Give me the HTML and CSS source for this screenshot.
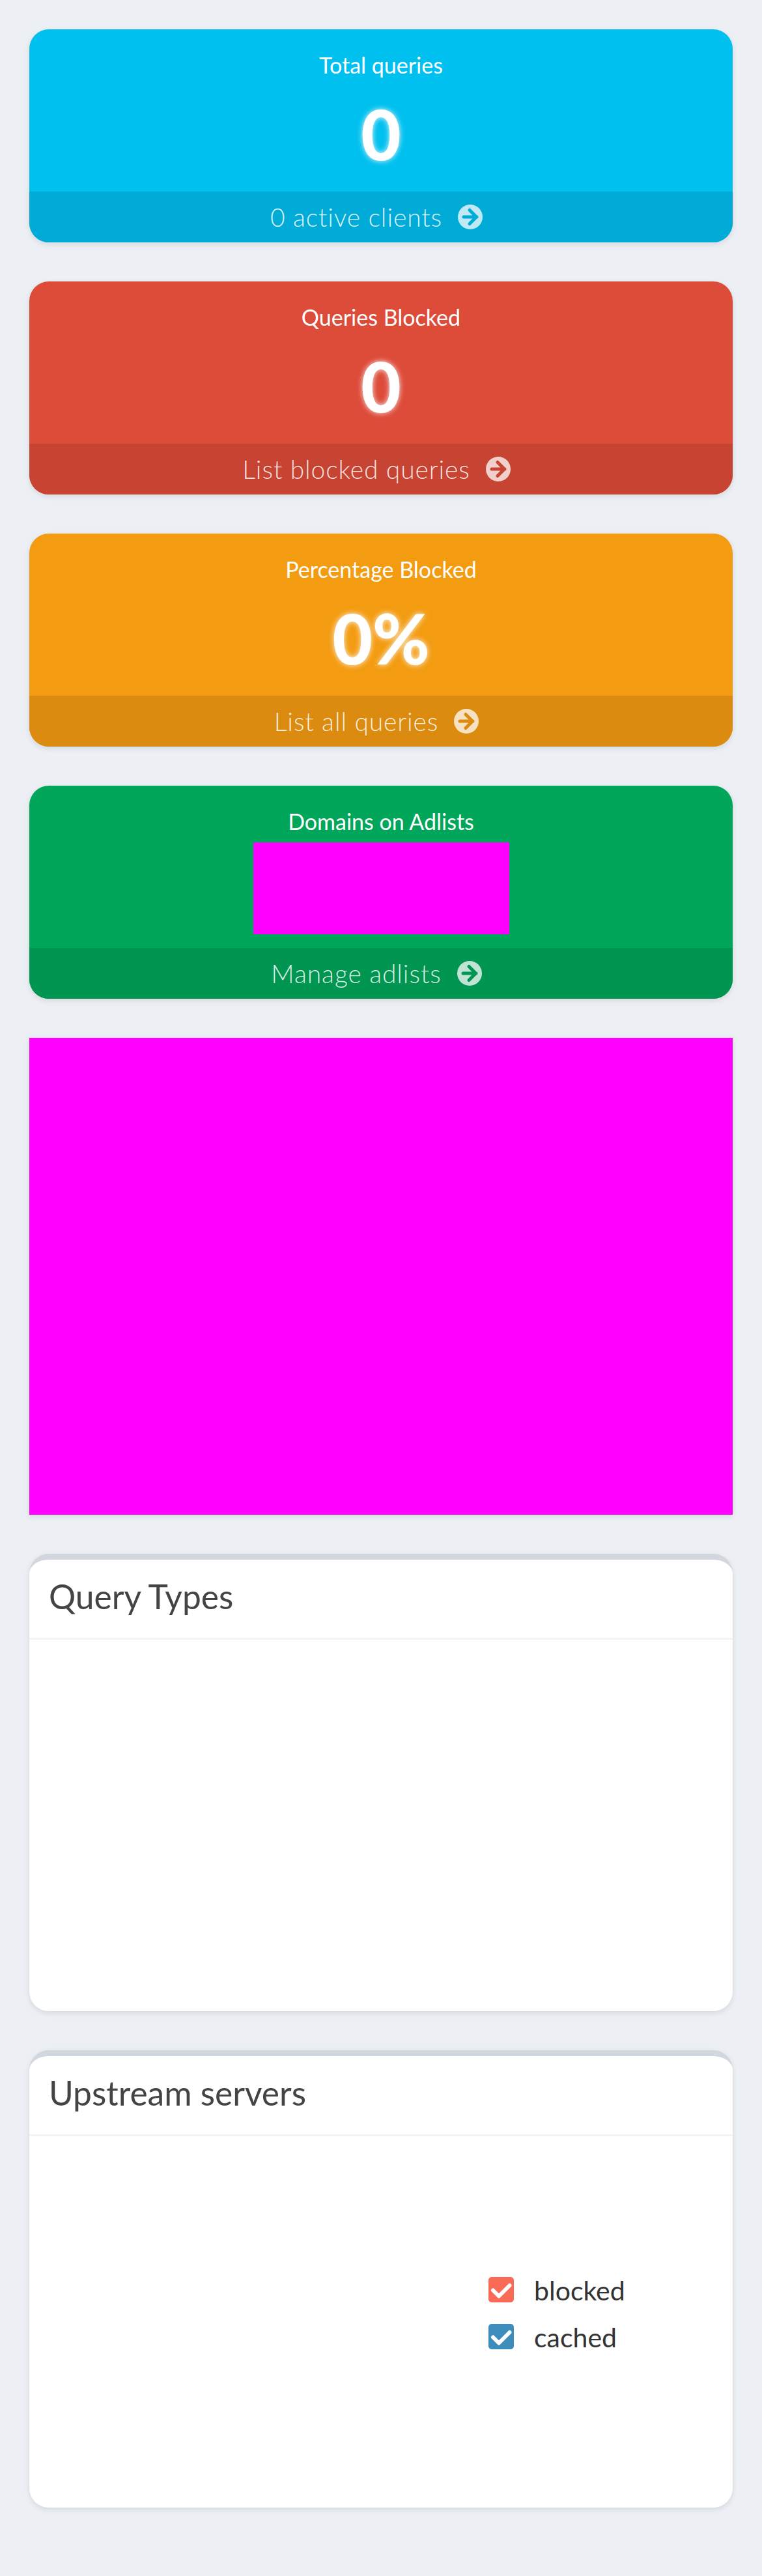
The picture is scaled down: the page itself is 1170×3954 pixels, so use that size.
FILE: index.html
```html
<!DOCTYPE html>
<html lang="en">
<head>
    <meta charset="UTF-8">
    <meta name="viewport" content="width=device-width, initial-scale=1.0">
    <title>Dashboard</title>
    <link rel="stylesheet" href="styles.css">
</head>
<body>

    <div class="page">
        <div class="stat-card stat-blue">
            <div class="stat-body">
                <p class="stat-label">Total queries</p>
                <div class="stat-number">0</div>
            </div>
            <a class="stat-footer" href="#">0 active clients
                <svg class="stat-arrow" viewBox="0 0 38 38"><circle cx="19" cy="19" r="19"/><path d="M9 19H29M18 8.500L28.500 19L18 29.500"/></svg>
            </a>
        </div>

        <div class="stat-card stat-red">
            <div class="stat-body">
                <p class="stat-label">Queries Blocked</p>
                <div class="stat-number">0</div>
            </div>
            <a class="stat-footer" href="#">List blocked queries
                <svg class="stat-arrow" viewBox="0 0 38 38"><circle cx="19" cy="19" r="19"/><path d="M9 19H29M18 8.500L28.500 19L18 29.500"/></svg>
            </a>
        </div>

        <div class="stat-card stat-orange">
            <div class="stat-body">
                <p class="stat-label">Percentage Blocked</p>
                <div class="stat-number">0%</div>
            </div>
            <a class="stat-footer" href="#">List all queries
                <svg class="stat-arrow" viewBox="0 0 38 38"><circle cx="19" cy="19" r="19"/><path d="M9 19H29M18 8.500L28.500 19L18 29.500"/></svg>
            </a>
        </div>

        <div class="stat-card stat-green">
            <div class="stat-body">
                <p class="stat-label">Domains on Adlists</p>
                <div class="stat-number"><div class="placeholder-small"></div></div>
            </div>
            <a class="stat-footer" href="#">Manage adlists
                <svg class="stat-arrow" viewBox="0 0 38 38"><circle cx="19" cy="19" r="19"/><path d="M9 19H29M18 8.500L28.500 19L18 29.500"/></svg>
            </a>
        </div>

        <div class="placeholder-large"></div>

        <div class="box">
            <h3 class="box-title">Query Types</h3>
            <div class="box-body"></div>
        </div>

        <div class="box">
            <h3 class="box-title">Upstream servers</h3>
            <div class="box-body">
                <ul class="legend">
                    <li class="legend-item">
                        <svg class="legend-check legend-blocked" viewBox="0 0 39 39"><path d="M7 20.500L16 29.500L32.500 13"/></svg>
                        <span class="legend-text">blocked</span>
                    </li>
                    <li class="legend-item">
                        <svg class="legend-check legend-cached" viewBox="0 0 39 39"><path d="M7 20.500L16 29.500L32.500 13"/></svg>
                        <span class="legend-text">cached</span>
                    </li>
                </ul>
            </div>
        </div>
    </div>

</body>
</html>
```

FILE: styles.css
```css
body {
    background: #ecf0f5;
    color: #333;
    font-family: Lato, 'Noto Sans', sans-serif;
    margin: 0;
}
.page {
    display: flex;
    flex-direction: column;
    gap: 60px;
    padding: 45px 45px 105px;
}
.stat-card {
    height: 327px;
    display: flex;
    flex-direction: column;
    background: var(--main);
    color: white;
    border-radius: 30px;
    overflow: hidden;
    box-shadow: 0px 3px 8px rgba(0, 0, 0, 0.1);
    text-align: center;
}
.stat-blue {
    --main: #00c0ef;
    --dark: #00acd7;
}
.stat-red {
    --main: #dd4b39;
    --dark: #c74433;
}
.stat-orange {
    --main: #f39c12;
    --dark: #db8c10;
}
.stat-green {
    --main: #00a65a;
    --dark: #009551;
}
.stat-body {
    height: 249px;
    padding-top: 23px;
    box-sizing: border-box;
}
.stat-label {
    margin: 0;
    font-size: 34px;
    line-height: 64px;
}
.stat-number {
    height: 141px;
    font-size: 106px;
    font-weight: 900;
    line-height: 147px;
    text-shadow: 0 0 8px rgba(255, 255, 255, 0.9);
}
.placeholder-small {
    width: 393px;
    height: 141px;
    margin: 0 auto;
    background: #f0f;
}
.stat-footer {
    height: 78px;
    padding-right: 14px;
    display: flex;
    justify-content: center;
    align-items: center;
    gap: 24px;
    background: var(--dark);
    color: rgba(255, 255, 255, 0.85);
    font-size: 39px;
    font-weight: 300;
    letter-spacing: 0.9px;
    text-decoration: none;
}
.stat-arrow {
    width: 38px;
    height: 38px;
}
.stat-arrow circle {
    fill: rgba(255, 255, 255, 0.75);
}
.stat-arrow path {
    fill: none;
    stroke: var(--dark);
    stroke-width: 5;
    stroke-linecap: round;
    stroke-linejoin: round;
}
.placeholder-large {
    height: 732px;
    background: #f0f;
    box-shadow: 0px 3px 8px rgba(0, 0, 0, 0.1);
}
.box {
    height: 702px;
    box-sizing: border-box;
    background: white;
    border-top: 9px solid #d2d6de;
    border-radius: 30px;
    box-shadow: 0px 3px 8px rgba(0, 0, 0, 0.1);
}
.box-title {
    height: 123px;
    box-sizing: border-box;
    margin: 0;
    padding-left: 30px;
    border-bottom: 3px solid #f4f4f4;
    color: #444;
    font-size: 51.500px;
    font-weight: 400;
    line-height: 112px;
}
.box-body {
    padding-top: 216px;
}
.legend {
    display: flex;
    flex-direction: column;
    gap: 33px;
    margin: 0 0 0 705px;
    padding: 0;
    list-style: none;
}
.legend-item {
    display: flex;
    align-items: center;
    gap: 31px;
    height: 39px;
    font-size: 41px;
}
.legend-text {
    line-height: 42px;
    padding-top: 3px;
}
.legend-check {
    width: 39px;
    height: 39px;
    border-radius: 5px;
}
.legend-check path {
    fill: none;
    stroke: white;
    stroke-width: 6;
    stroke-linecap: round;
    stroke-linejoin: round;
}
.legend-blocked {
    background: #f96a57;
}
.legend-cached {
    background: #3c8dbc;
}
```
